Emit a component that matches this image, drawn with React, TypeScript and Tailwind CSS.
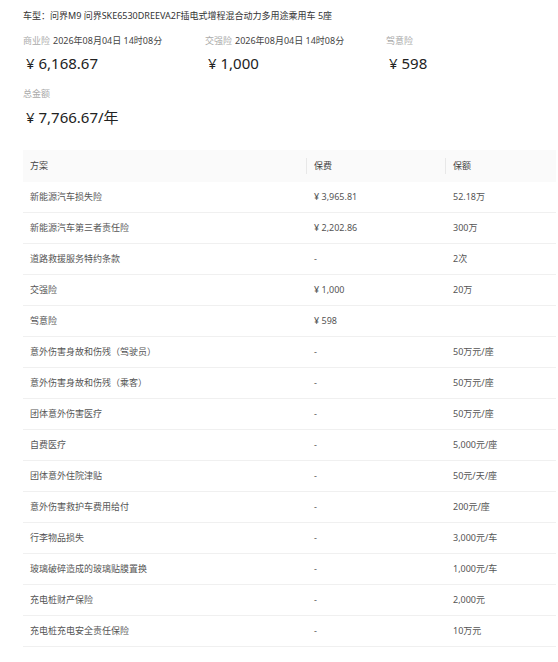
import React from "react";

interface PlanRow {
  name: string;
  premium: string;
  coverage: string;
}

const rows: PlanRow[] = [
  { name: "新能源汽车损失险", premium: "¥ 3,965.81", coverage: "52.18万" },
  { name: "新能源汽车第三者责任险", premium: "¥ 2,202.86", coverage: "300万" },
  { name: "道路救援服务特约条款", premium: "-", coverage: "2次" },
  { name: "交强险", premium: "¥ 1,000", coverage: "20万" },
  { name: "驾意险", premium: "¥ 598", coverage: "" },
  { name: "意外伤害身故和伤残（驾驶员）", premium: "-", coverage: "50万元/座" },
  { name: "意外伤害身故和伤残（乘客）", premium: "-", coverage: "50万元/座" },
  { name: "团体意外伤害医疗", premium: "-", coverage: "50万元/座" },
  { name: "自费医疗", premium: "-", coverage: "5,000元/座" },
  { name: "团体意外住院津贴", premium: "-", coverage: "50元/天/座" },
  { name: "意外伤害救护车费用给付", premium: "-", coverage: "200元/座" },
  { name: "行李物品损失", premium: "-", coverage: "3,000元/车" },
  { name: "玻璃破碎造成的玻璃贴膜置换", premium: "-", coverage: "1,000元/车" },
  { name: "充电桩财产保险", premium: "-", coverage: "2,000元" },
  { name: "充电桩充电安全责任保险", premium: "-", coverage: "10万元" },
];

const summary = [
  { label: "商业险", date: "2026年08月04日 14时08分", amount: "¥ 6,168.67" },
  { label: "交强险", date: "2026年08月04日 14时08分", amount: "¥ 1,000" },
  { label: "驾意险", date: "", amount: "¥ 598" },
];

export default function App() {
  return (
    <div
      className="w-[558px] h-[662px] bg-white overflow-hidden pl-[23px] pt-[9px] text-[#333]"
      style={{ fontFamily: '"Noto Sans", "Noto Sans CJK SC", sans-serif' }}
    >
      <div className="text-[9px] leading-[14px]">
        车型：问界M9 问界SKE6530DREEVA2F插电式增程混合动力多用途乘用车 5座
      </div>

      <div className="mt-[11px] grid grid-cols-[182px_181px_150px]">
        {summary.map((s) => (
          <div key={s.label}>
            <div className="text-[9px] leading-[14px]">
              <span className="text-[#aaa]">{s.label}</span>
              {s.date && <span className="ml-[3px] text-[#444]">{s.date}</span>}
            </div>
            <div className="mt-[5px] pl-[3px] text-[15px] leading-[20px] text-[#222]">{s.amount}</div>
          </div>
        ))}
      </div>

      <div className="mt-[14px] text-[9px] leading-[14px] text-[#aaa]">总金额</div>
      <div className="mt-[6px] pl-[3px] text-[15px] leading-[20px] text-[#222]">¥ 7,766.67/年</div>

      <div className="mt-[23px] w-[533px] text-[9px] text-[#555]">
        <div className="grid grid-cols-[283px_139px_111px] h-[32px] items-center bg-[#fafafa] text-[#444]">
          <div className="pl-[7px]">方案</div>
          <div className="pl-[7px] leading-[16px] border-l border-[#e8e8e8]">保费</div>
          <div className="pl-[7px] leading-[16px] border-l border-[#e8e8e8]">保额</div>
        </div>
        {rows.map((r) => (
          <div
            key={r.name}
            className="grid grid-cols-[283px_139px_111px] h-[31px] items-center border-b border-[#f0f0f0]"
          >
            <div className="pl-[7px]">{r.name}</div>
            <div className="pl-[8px]">{r.premium}</div>
            <div className="pl-[8px]">{r.coverage}</div>
          </div>
        ))}
      </div>
    </div>
  );
}
